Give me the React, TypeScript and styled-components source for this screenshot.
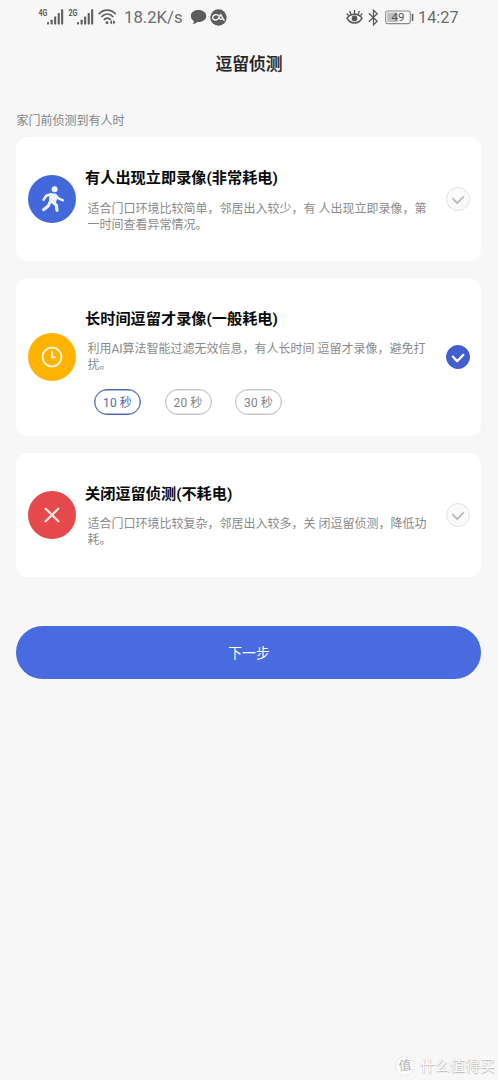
import React from "react";
import styled, { createGlobalStyle } from "styled-components";

const GlobalStyle = createGlobalStyle`
  * { box-sizing: border-box; }
  body {
    margin: 0;
    background: #f7f7f7;
    font-family: Roboto, "Noto Sans CJK SC", sans-serif;
  }
  svg { display: block; flex: none; }
`;

const Screen = styled.div`
  width: 498px;
  height: 1080px;
  display: flex;
  flex-direction: column;
  background: #f7f7f7;
  overflow: hidden;
`;

const StatusBar = styled.header`
  height: 34px;
  padding: 0 39px 0 38px;
  display: flex;
  justify-content: space-between;
  color: #5e5e5e;
`;

const StatusGroup = styled.div`
  display: flex;
  align-items: center;
  height: 34px;
`;

const StatusItem = styled.div<{ $gap?: number }>`
  margin-left: ${(p) => p.$gap ?? 0}px;
`;

const StatusText = styled.span<{ $width: number; $gap: number; $size: number }>`
  width: ${(p) => p.$width}px;
  margin-left: ${(p) => p.$gap}px;
  font-size: ${(p) => p.$size}px;
  line-height: 34px;
  padding-top: 2px;
  white-space: nowrap;
  color: #6c6c6c;
`;

const PageTitle = styled.h1`
  margin: 13px 0 0;
  font-size: 16.8px;
  font-weight: 500;
  line-height: 34px;
  text-align: center;
  color: #222;
  -webkit-text-stroke: 0.25px #222;
`;

const Main = styled.main`
  padding: 30px 17px 0 16px;
  display: flex;
  flex-direction: column;
`;

const SectionLabel = styled.p`
  margin: 0;
  padding-left: 0.5px;
  font-size: 12px;
  line-height: 20px;
  height: 26px;
  color: #858585;
`;

const CardList = styled.div`
  display: flex;
  flex-direction: column;
  gap: 17px;
`;

const Card = styled.section<{ $height: number }>`
  height: ${(p) => p.$height}px;
  padding: 0 11px 0 12px;
  display: flex;
  align-items: center;
  background: #fff;
  border-radius: 12px;
`;

const IconDisc = styled.div<{ $color: string }>`
  flex: none;
  width: 48px;
  height: 48px;
  border-radius: 50%;
  display: grid;
  place-items: center;
  background: ${(p) => p.$color};
`;

const CardBody = styled.div`
  flex: 1;
  align-self: stretch;
  padding: 30px 0 0 9px;
`;

const CardTitle = styled.h2`
  margin: 0;
  font-size: 15.2px;
  font-weight: 700;
  line-height: 22px;
  color: #0a0a0a;
  white-space: nowrap;
`;

const Description = styled.p<{ $top: number }>`
  margin: ${(p) => p.$top}px 0 0 2.5px;
  font-size: 12px;
  line-height: 16px;
  color: #8a8a8a;
  white-space: pre;
`;

const Durations = styled.div`
  display: flex;
  gap: 23.5px;
  margin: 16px 0 0 9px;
`;

const Duration = styled.button<{ $active?: boolean }>`
  width: 47px;
  height: 26px;
  padding: 2px 0 0;
  border: 1px solid ${(p) => (p.$active ? "#5268ac" : "#c4c4c4")};
  box-shadow: inset 0 0 0 0.4px ${(p) => (p.$active ? "#5268ac" : "#d0d0d0")};
  border-radius: 13px;
  background: #fff;
  color: ${(p) => (p.$active ? "#5268ac" : "#858585")};
  font-family: inherit;
  font-size: 12px;
  line-height: 22px;
  letter-spacing: 0.1px;
  white-space: nowrap;
`;

const Radio = styled.div<{ $checked?: boolean }>`
  flex: none;
  width: 24px;
  height: 24px;
  border-radius: 50%;
  display: grid;
  place-items: center;
  background: ${(p) => (p.$checked ? "#435fcf" : "#fafafa")};
  border: 1px solid ${(p) => (p.$checked ? "#435fcf" : "#e2e2e2")};
  color: ${(p) => (p.$checked ? "#fff" : "#bcbcbc")};
`;

const NextButton = styled.button`
  margin-top: 49px;
  height: 53px;
  padding: 1px 0 0 1px;
  border: 0;
  border-radius: 27px;
  background: #486ce0;
  color: #fff;
  font-family: inherit;
  font-size: 13.8px;
  line-height: 52px;
`;

const Watermark = styled.footer`
  margin-top: auto;
  height: 28px;
  padding-right: 3px;
  display: flex;
  justify-content: flex-end;
  align-items: center;
  gap: 6px;
  color: #fff;
  font-size: 15px;
  line-height: 24px;
  text-shadow: 0.5px 0.5px 1px #b4b4b4, -0.5px -0.5px 0.5px #d4d4d4;
`;

const WatermarkBadge = styled.span`
  width: 18px;
  height: 18px;
  border-radius: 50%;
  display: grid;
  place-items: center;
  background: #fdfdfd;
  box-shadow: 0 0 1px #bbb;
  color: #b5b5b5;
  font-size: 13px;
  line-height: 18px;
  text-shadow: none;
  transform: rotate(-6deg);
`;

const Signal = ({ label }: { label: string }) => (
  <svg width="26" height="18" viewBox="0 0 26 18" fill="currentColor">
    <text
      x="0.5"
      y="8"
      fontSize="9"
      fontWeight="700"
      fontFamily="Roboto, sans-serif"
      textLength="9"
      lengthAdjust="spacingAndGlyphs"
    >
      {label}
    </text>
    <rect x="9" y="14" width="2" height="2.5" rx=".4" />
    <rect x="12.6" y="11.8" width="2.1" height="4.7" rx=".4" />
    <rect x="16.1" y="8.4" width="2.1" height="8.1" rx=".4" />
    <rect x="19.7" y="5" width="2.1" height="11.5" rx=".4" />
    <rect x="23.1" y="1.3" width="2.1" height="15.2" rx=".4" />
  </svg>
);

const Wifi = () => (
  <svg width="19" height="18" viewBox="0 0 19 18" fill="none" stroke="currentColor">
    <path d="M.8 6.1C5.5.8 13 .8 17.7 6.1" strokeWidth="1.7" />
    <path d="M3.3 9C7 5 11.8 5 15.3 9" strokeWidth="1.7" />
    <path d="M5.8 11.9c2.2-2.4 4.9-2.4 7 0" strokeWidth="1.7" />
    <circle cx="9" cy="14.7" r="1.4" fill="currentColor" stroke="none" />
    <path d="M14.1 12.1v4.4l-2.3-2.2zM15.2 12.1v4.4l2.4-2.2z" fill="currentColor" stroke="none" />
  </svg>
);

const Bubble = () => (
  <svg width="17" height="16" viewBox="0 0 17 16" fill="#5d5d5d">
    <path d="M8.5 1C4 1 .8 3.5.8 7c0 2 1.1 3.8 3 4.9C3.8 13.3 3.3 14.3 2.5 15c2 0 3.7-.8 4.9-2 5 .5 8.8-2.300 8.800-6 0-3.500-3.200-6-7.700-6z" />
  </svg>
);

const CloudBadge = () => (
  <svg width="17" height="17" viewBox="0 0 17 17">
    <circle cx="8.5" cy="8.5" r="8.2" fill="#5d5d5d" />
    <path
      d="M8.6 6.5C6.7 4.8 2.7 5.6 2.7 8.5c0 2.8 3.9 3.4 5.5 1.2l2.5-4.1 3.4 5.7M9.3 9.5c1.3.9 2.3 1 3.5.2"
      fill="none"
      stroke="#f5f5f5"
      strokeWidth="1.4"
      strokeLinecap="round"
      strokeLinejoin="round"
    />
  </svg>
);

const Eye = () => (
  <svg width="17" height="16" viewBox="0 0 17 16" fill="none" stroke="#565656" strokeWidth="1.5">
    <path d="M1 9.2C4.3 4 12.7 4 16 9.2 12.7 15.6 4.3 15.6 1 9.2z" />
    <circle cx="8.5" cy="9.4" r="2.8" fill="#565656" stroke="none" />
    <path d="M8.5 1v4M3.6 2.1l1.3 3.2M13.4 2.1l-1.3 3.2M.7 4.5l1.9 2.1M16.3 4.5l-1.9 2.1" strokeWidth="1.3" />
  </svg>
);

const Bluetooth = () => (
  <svg width="11" height="17" viewBox="0 0 11 17" fill="none" stroke="#5c5c5c" strokeWidth="1.3">
    <path d="M.8 4.2l8.4 8.1-3.7 3.5V1.2l3.7 3.5-8.4 8.1" />
  </svg>
);

const Battery = () => (
  <svg width="29" height="15" viewBox="0 0 29 15">
    <rect x=".7" y="1" width="24.6" height="12.6" rx="1.8" fill="#f7f7f7" stroke="#8c8c8c" strokeWidth="1.1" />
    <rect x="2.3" y="2.6" width="10.2" height="9.4" fill="#bdbdbd" />
    <rect x="26.8" y="3.7" width="1.5" height="7.4" rx=".5" fill="#5c5c5c" />
    <text x="13" y="11.4" fontSize="11.5" fontFamily="Roboto, sans-serif" textAnchor="middle" fill="#555">
      49
    </text>
  </svg>
);

const Walker = () => (
  <svg width="27" height="30" viewBox="0 0 27 30" fill="none" stroke="#edf3ff" strokeLinecap="round" strokeLinejoin="round">
    <circle cx="15.6" cy="5.2" r="3" fill="#edf3ff" stroke="none" />
    <path d="M11.500 10.300l4.500.2 1.300 3.500-1.600 5.200-4.700-1.400z" fill="#edf3ff" strokeWidth="2" />
    <path d="M12 10.300L7.200 11.800 4.600 15.800" strokeWidth="2.5" />
    <path d="M16.500 11l3 3.300 4.500 2" strokeWidth="2.5" />
    <path d="M11.200 17.500L9.300 22l-4.800 3.700" strokeWidth="3" />
    <path d="M14 18l3.400 3.300.6 5" strokeWidth="3.200" />
  </svg>
);

const Clock = () => (
  <svg width="22" height="22" viewBox="0 0 22 22" fill="none" stroke="#fff5d5" strokeWidth="2">
    <circle cx="11" cy="11" r="9.5" />
    <path d="M11 5.3v6h3.9" />
  </svg>
);

const Cross = () => (
  <svg width="16" height="16" viewBox="0 0 16 16" stroke="#ffe6e2" strokeWidth="2.3" strokeLinecap="round">
    <path d="M1.7 1.7l12.6 12.6M14.3 1.7L1.7 14.3" />
  </svg>
);

const Check = ({ width }: { width: number }) => (
  <svg
    width="14"
    height="12"
    viewBox="0 0 14 12"
    fill="none"
    stroke="currentColor"
    strokeWidth={width}
    strokeLinecap="round"
    strokeLinejoin="round"
  >
    <path d="M1.9 5.6l4.3 4.6 6.1-6.3" />
  </svg>
);

interface Option {
  title: string;
  text: string;
  color: string;
  icon: React.ReactNode;
  height: number;
  textTop: number;
  checked?: boolean;
  durations?: string[];
}

const options: Option[] = [
  {
    title: "有人出现立即录像(非常耗电)",
    text: "适合门口环境比较简单，邻居出入较少，有 人出现立即录像，第\n一时间查看异常情况。",
    color: "#4268dc",
    icon: <Walker />,
    height: 124,
    textTop: 12,
  },
  {
    title: "长时间逗留才录像(一般耗电)",
    text: "利用AI算法智能过滤无效信息，有人长时间 逗留才录像，避免打\n扰。",
    color: "#ffb300",
    icon: <Clock />,
    height: 158,
    textTop: 11,
    checked: true,
    durations: ["10 秒", "20 秒", "30 秒"],
  },
  {
    title: "关闭逗留侦测(不耗电)",
    text: "适合门口环境比较复杂，邻居出入较多，关 闭逗留侦测，降低功\n耗。",
    color: "#e5494b",
    icon: <Cross />,
    height: 124,
    textTop: 11,
  },
];

export default function App() {
  return (
    <>
      <GlobalStyle />
      <Screen>
        <StatusBar>
          <StatusGroup>
            <StatusItem><Signal label="4G" /></StatusItem>
            <StatusItem $gap={4}><Signal label="2G" /></StatusItem>
            <StatusItem $gap={4}><Wifi /></StatusItem>
            <StatusText $gap={7} $width={59} $size={16.7}>18.2K/s</StatusText>
            <StatusItem $gap={7}><Bubble /></StatusItem>
            <StatusItem $gap={3}><CloudBadge /></StatusItem>
          </StatusGroup>
          <StatusGroup>
            <StatusItem><Eye /></StatusItem>
            <StatusItem $gap={5}><Bluetooth /></StatusItem>
            <StatusItem $gap={6}><Battery /></StatusItem>
            <StatusText $gap={4} $width={41} $size={16.3}>14:27</StatusText>
          </StatusGroup>
        </StatusBar>
        <PageTitle>逗留侦测</PageTitle>
        <Main>
          <SectionLabel>家门前侦测到有人时</SectionLabel>
          <CardList>
            {options.map((o) => (
              <Card key={o.title} $height={o.height}>
                <IconDisc $color={o.color}>{o.icon}</IconDisc>
                <CardBody>
                  <CardTitle>{o.title}</CardTitle>
                  <Description $top={o.textTop}>{o.text}</Description>
                  {o.durations && (
                    <Durations>
                      {o.durations.map((d, i) => (
                        <Duration key={d} $active={i === 0}>{d}</Duration>
                      ))}
                    </Durations>
                  )}
                </CardBody>
                <Radio $checked={o.checked}>
                  <Check width={o.checked ? 2.3 : 1.9} />
                </Radio>
              </Card>
            ))}
          </CardList>
          <NextButton>下一步</NextButton>
        </Main>
        <Watermark>
          <WatermarkBadge>值</WatermarkBadge>
          什么值得买
        </Watermark>
      </Screen>
    </>
  );
}
